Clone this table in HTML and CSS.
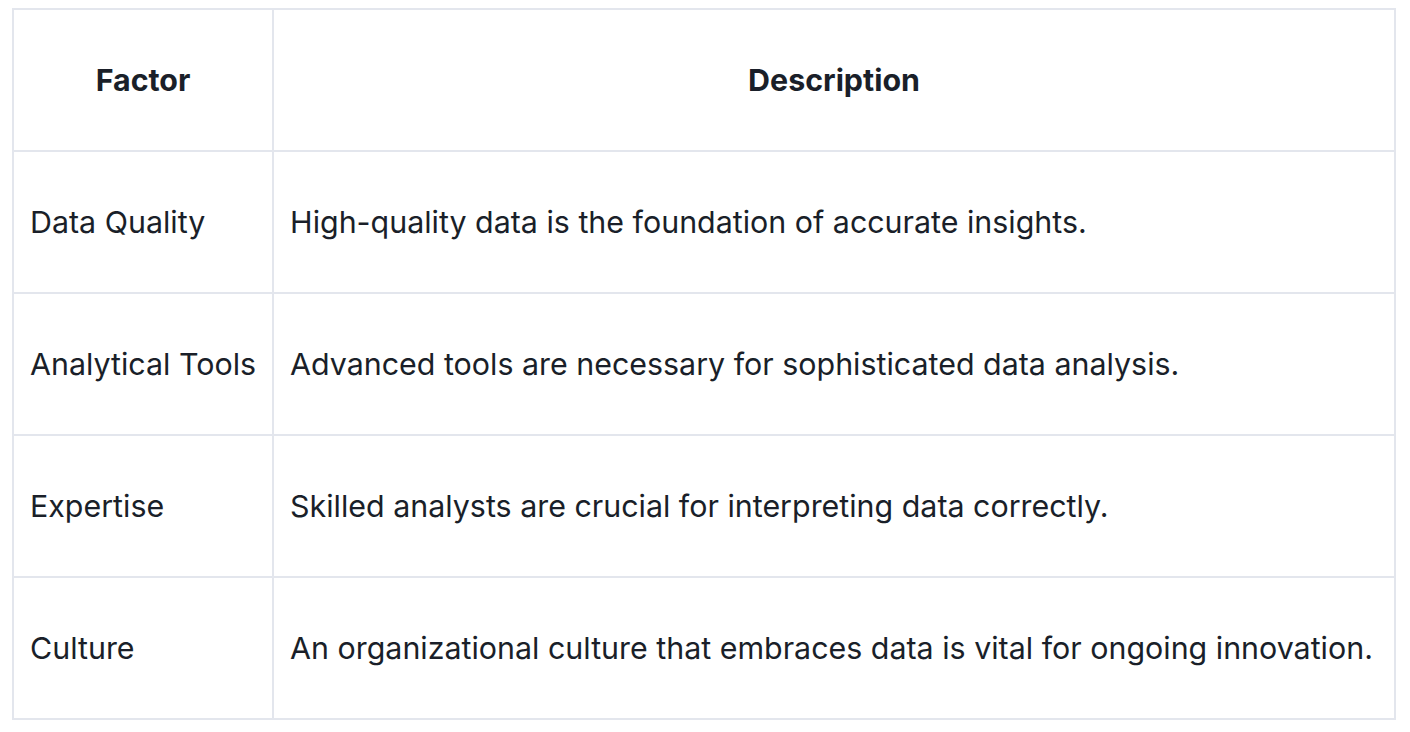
FILE: index.html
```html
<!DOCTYPE html>
<html lang="en">
<head>
<meta charset="utf-8">
<title>Factors</title>
<link rel="stylesheet" href="styles.css">
</head>
<body>
<table class="factors">
  <thead>
    <tr><th class="col-factor">Factor</th><th>Description</th></tr>
  </thead>
  <tbody>
    <tr><td>Data Quality</td><td>High-quality data is the foundation of accurate insights.</td></tr>
    <tr><td>Analytical Tools</td><td>Advanced tools are necessary for sophisticated data analysis.</td></tr>
    <tr><td>Expertise</td><td>Skilled analysts are crucial for interpreting data correctly.</td></tr>
    <tr><td>Culture</td><td>An organizational culture that embraces data is vital for ongoing innovation.</td></tr>
  </tbody>
</table>
</body>
</html>
```

FILE: styles.css
```css
html, body {
  background: #ffffff;
}
body {
  margin: 8px 14px 8px 12px;
  font-family: Inter, "Noto Sans", sans-serif;
  color: #1a1f29;
}
.factors {
  width: 100%;
  border-collapse: separate;
  border-spacing: 0;
  border-top: 2px solid #e3e6ed;
  border-left: 2px solid #e3e6ed;
  font-size: 30.4px;
  line-height: 36px;
}
.factors th,
.factors td {
  border-right: 2px solid #e3e6ed;
  border-bottom: 2px solid #e3e6ed;
  padding: 52px 16px;
  white-space: nowrap;
}
.factors th {
  font-weight: 700;
  text-align: center;
}
.factors td {
  font-weight: 400;
  text-align: left;
}
.col-factor {
  width: 1px;
}
```
